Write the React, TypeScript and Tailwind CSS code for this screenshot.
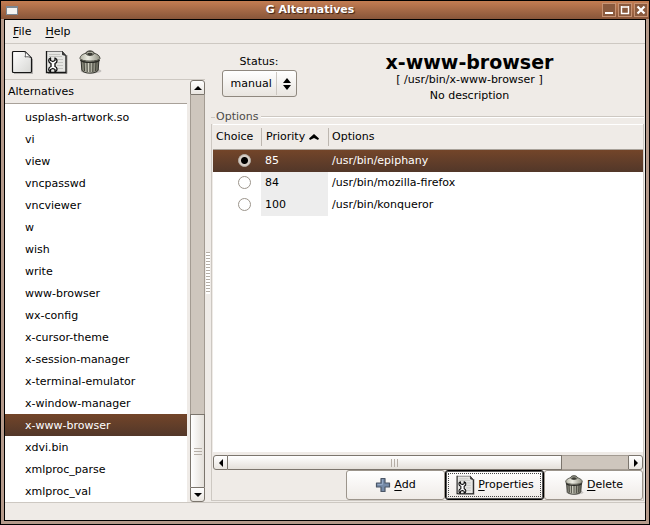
import React, { useState } from 'react';

const ALTERNATIVES = [
  'usplash-artwork.so',
  'vi',
  'view',
  'vncpasswd',
  'vncviewer',
  'w',
  'wish',
  'write',
  'www-browser',
  'wx-config',
  'x-cursor-theme',
  'x-session-manager',
  'x-terminal-emulator',
  'x-window-manager',
  'x-www-browser',
  'xdvi.bin',
  'xmlproc_parse',
  'xmlproc_val',
];

const OPTIONS = [
  { priority: 85, path: '/usr/bin/epiphany' },
  { priority: 84, path: '/usr/bin/mozilla-firefox' },
  { priority: 100, path: '/usr/bin/konqueror' },
];

interface IconProps {
  className: string;
}

function PageIcon({ className }: IconProps) {
  return (
    <svg viewBox="0 0 24 24" className={className}>
      <defs>
        <linearGradient id="page" x1="0" y1="0" x2="1" y2="1">
          <stop offset="0" stopColor="#fff" />
          <stop offset="1" stopColor="#d6d6d3" />
        </linearGradient>
      </defs>
      <path d="M4 23.5h18.500V9" fill="none" stroke="#000" strokeOpacity=".25" />
      <path
        d="M3.500 1.500h11.500l6.500 6.500v13.500a1 1 0 0 1-1 1h-17a1 1 0 0 1-1-1v-19a1 1 0 0 1 1-1z"
        fill="url(#page)"
        stroke="#161616"
        strokeWidth="1.200"
      />
      <path d="M15 1.500c.8 2 .6 4 0 5.500 2-.5 4.500-.3 6.500 1z" fill="#fff" stroke="#3a3a3a" strokeWidth=".8" />
    </svg>
  );
}

function PropertiesIcon({ className }: IconProps) {
  return (
    <svg viewBox="0 0 24 24" className={className}>
      <path d="M4 23.500h19V5" fill="none" stroke="#000" strokeOpacity=".3" />
      <path d="M2.500 1.500h16l3.500 4v17H2.500z" fill="#e6e6e3" />
      <path d="M5 4.500h11M5 6.500h13M13 9.500h6M13 12.500h6M13 15.500h6M13 18.500h6" stroke="#c4c4c0" />
      <path d="M2.500 1.500h16.500" stroke="#777" />
      <path d="M2.500 1v21.500H22V5.500" fill="none" stroke="#161616" strokeWidth="1.300" />
      <path d="M18.500 1.500l3.500 4-3.500-.8z" fill="#444" stroke="#222" strokeWidth=".8" />
      <path
        d="M6.500 8C4 9 4 12.500 7 13.500v3C4 17.500 4 21 6.500 22v-2.500l2.300-1 2.200 1V22c2.700-1 2.700-4.500 0-5.500v-3c2.700-1 2.700-4.500 0-5.500v2.500l-2.200 1-2.300-1z"
        fill="#fff"
        stroke="#0c0c0c"
        strokeWidth="1.300"
        strokeLinejoin="round"
      />
    </svg>
  );
}

function TrashIcon({ className }: IconProps) {
  return (
    <svg viewBox="0 0 24 24" className={className}>
      <defs>
        <linearGradient id="can">
          <stop offset="0" stopColor="#6a6a5e" />
          <stop offset=".4" stopColor="#d4d4c6" />
          <stop offset="1" stopColor="#5c5c50" />
        </linearGradient>
        <linearGradient id="lid">
          <stop offset="0" stopColor="#b5b5a6" />
          <stop offset=".4" stopColor="#ecece2" />
          <stop offset="1" stopColor="#8f8f80" />
        </linearGradient>
      </defs>
      <ellipse cx="13" cy="21" rx="10.500" ry="2.500" fill="#000" fillOpacity=".18" />
      <path d="M3 9l.8 11c1.200 4.200 15.200 4.200 16.400 0L21 9z" fill="url(#can)" stroke="#33332d" />
      <path
        d="M6 12l.5 9M9 12.500l.2 9.500M12 12.500v9.500M15 12.500l-.2 9.500M18 12l-.5 9"
        stroke="#45453c"
        strokeWidth="1.100"
      />
      <path d="M2.500 10c2.500 3.200 16.500 3.200 19 0" fill="none" stroke="#2b2b26" strokeWidth="1.400" />
      <path
        d="M2 8.500C2 5.500 5 4 8 3.200c0-3 8-3 8 0 3 .8 6 2.300 6 5.300-1 3.500-19 3.500-20 0z"
        fill="url(#lid)"
        stroke="#4a4a42"
      />
      <path d="M8 3.500c0-3 8-3 8 0-.5 2.500-7.500 2.500-8 0z" fill="#bdbdaf" stroke="#3c3c35" />
      <ellipse cx="12" cy="4" rx="2.800" ry="1.200" fill="#3c3c35" />
    </svg>
  );
}

function AddIcon({ className }: IconProps) {
  return (
    <svg viewBox="0 0 16 16" className={className}>
      <path
        d="M6 1.500h4V6h4.500v4H10v4.500H6V10H1.500V6H6z"
        fill="#768ba8"
        stroke="#4b5666"
        strokeWidth="1.200"
        strokeLinejoin="round"
      />
      <path d="M7.500 2.500v5h-5" fill="none" stroke="#94a8c4" />
    </svg>
  );
}

interface ScrollArrowProps {
  label: string;
  className: string;
  points: string;
}

function ScrollArrow({ label, className, points }: ScrollArrowProps) {
  return (
    <button
      aria-label={label}
      className={`flex size-[15px] shrink-0 items-center justify-center border border-[#7b756d] bg-gradient-to-b from-white to-[#e9e5e0] ${className}`}
    >
      <svg viewBox="0 0 8 8" className="size-2">
        <polygon points={points} fill="#000" />
      </svg>
    </button>
  );
}

interface ActionButtonProps {
  label: string;
  icon: React.ReactNode;
  focused?: boolean;
}

function ActionButton({ label, icon, focused }: ActionButtonProps) {
  return (
    <button
      className={`h-[30px] w-[99px] rounded-[3px] bg-gradient-to-b from-white to-[#efebe7] ${
        focused ? 'border border-black p-0.5 ring-1 ring-[#555] ring-inset' : 'border border-[#9c958c] p-0.5'
      }`}
    >
      <span
        className={`flex h-full items-center justify-center gap-[3px] ${
          focused ? 'border border-dotted border-[#444]' : ''
        }`}
      >
        {icon}
        <span>
          <span className="underline underline-offset-2">{label[0]}</span>
          {label.slice(1)}
        </span>
      </span>
    </button>
  );
}

const WINDOW_BUTTON =
  'flex size-[14px] items-center justify-center border border-[#c79272] bg-[#8a5a3e]';

export default function App() {
  const [selected, setSelected] = useState('x-www-browser');
  const [choice, setChoice] = useState(0);
  const [status, setStatus] = useState('manual');

  return (
    <div className="flex h-screen flex-col border border-black bg-[#b59a8b] font-['DejaVu_Sans',sans-serif] text-[11px] leading-[14px] text-black">
      {/* title bar */}
      <header className="flex h-[18px] shrink-0 items-center bg-gradient-to-b from-[#c47d52] to-[#88563a] pr-px pl-[5px]">
        <span className="h-[9px] w-3 border border-t-2 border-[#7d8791] bg-[#f4f4f2]"></span>
        <h1 className="flex-1 text-center font-bold text-white [text-shadow:1px_1px_1px_#3a2012]">G Alternatives</h1>
        <div className="flex gap-0.5">
          <button aria-label="Minimize" className={WINDOW_BUTTON}>
            <svg viewBox="0 0 10 10" className="size-[10px]">
              <path d="M1 8h8" stroke="#fff" strokeWidth="2" />
            </svg>
          </button>
          <button aria-label="Maximize" className={WINDOW_BUTTON}>
            <svg viewBox="0 0 10 10" className="size-[10px]">
              <path d="M1.500 1v7.500h7V1M1 2h8" fill="none" stroke="#fff" strokeWidth="1.400" />
            </svg>
          </button>
          <button aria-label="Close" className={WINDOW_BUTTON}>
            <svg viewBox="0 0 10 10" className="size-[10px]">
              <path d="M1.500 1.500l7 7M8.500 1.500l-7 7" stroke="#fff" strokeWidth="2.200" />
            </svg>
          </button>
        </div>
      </header>

      <div className="mx-[3px] mb-[3px] flex min-h-0 flex-1 flex-col border border-black bg-[#efebe7]">
        {/* menu bar */}
        <nav className="flex h-6 shrink-0 items-center gap-[14px] border-b border-[#cdc8c2] px-2 pt-px">
          <button>
            <span className="underline underline-offset-2">F</span>ile
          </button>
          <button>
            <span className="underline underline-offset-2">H</span>elp
          </button>
        </nav>

        <main className="flex min-h-0 flex-1">
          <section className="flex w-[200px] shrink-0 flex-col">
            <div className="flex h-9 shrink-0 items-center gap-[10px] border-b border-[#cdc8c2] pl-[5px]">
              <button aria-label="New">
                <PageIcon className="size-6" />
              </button>
              <button aria-label="Properties">
                <PropertiesIcon className="size-6" />
              </button>
              <button aria-label="Delete">
                <TrashIcon className="size-6" />
              </button>
            </div>

            <div className="flex min-h-0 flex-1 gap-[3px]">
              <div className="flex min-w-0 flex-1 flex-col bg-white">
                <h2 className="flex h-6 shrink-0 items-center border-b border-[#a8a199] bg-[#efebe7] pt-px pl-[3px]">
                  Alternatives
                </h2>
                <ul className="min-h-0 flex-1 overflow-hidden pt-0.5">
                  {ALTERNATIVES.map(name => (
                    <li key={name}>
                      <button
                        onClick={() => setSelected(name)}
                        className={`block h-[22px] w-full pt-0.5 pl-5 text-left ${
                          selected === name ? 'bg-gradient-to-b from-[#734529] to-[#523729] text-white' : ''
                        }`}
                      >
                        {name}
                      </button>
                    </li>
                  ))}
                </ul>
              </div>

              {/* vertical scrollbar */}
              <div className="flex w-[15px] flex-col">
                <ScrollArrow label="Scroll up" className="rounded-t-[3px]" points="4,2 8,6 0,6" />
                <div className="flex-1 border-x border-[#a39b92] bg-[#cec6bd]"></div>
                <div className="flex h-[73px] flex-col items-center justify-center gap-0.5 border border-b-0 border-[#7b756d] bg-gradient-to-r from-white to-[#e4e0da]">
                  <span className="h-px w-2 bg-[#b5aea6]"></span>
                  <span className="h-px w-2 bg-[#b5aea6]"></span>
                  <span className="h-px w-2 bg-[#b5aea6]"></span>
                </div>
                <ScrollArrow label="Scroll down" className="rounded-b-[3px]" points="0,2 8,2 4,6" />
              </div>
            </div>
          </section>

          {/* pane handle */}
          <div className="flex w-[6px] shrink-0 items-center justify-center">
            <div className="h-[42px] w-1 bg-[repeating-linear-gradient(to_bottom,#b5aea6_0_1px,#fff_1px_3px)]"></div>
          </div>

          <section className="flex min-w-0 flex-1 flex-col pr-px pb-px">
            <div className="flex h-[66px] shrink-0 gap-[10px] pl-[10px]">
              <div className="flex w-[76px] flex-col items-center pt-[11px]">
                <label htmlFor="status">Status:</label>
                <div className="relative mt-px">
                  <select
                    id="status"
                    value={status}
                    onChange={e => setStatus(e.target.value)}
                    className="h-[27px] w-[75px] appearance-none rounded-[3px] border border-[#8f887f] bg-gradient-to-b from-white to-[#e9e5e0] pl-2"
                  >
                    <option>manual</option>
                    <option>auto</option>
                  </select>
                  <div className="pointer-events-none absolute inset-y-0.5 right-[6px] flex items-center border-l border-[#cdc8c2] pl-[6px]">
                    <svg viewBox="0 0 8 12" className="h-3 w-2">
                      <path d="M4 0l4 5H0zM4 12l4-5H0z" />
                    </svg>
                  </div>
                </div>
              </div>
              <div className="flex flex-1 flex-col items-center pt-[7px] pr-3">
                <h2 className="text-[19px] leading-[22px] font-bold">x-www-browser</h2>
                <p>[ /usr/bin/x-www-browser ]</p>
                <p className="mt-0.5">No description</p>
              </div>
            </div>

            <fieldset className="flex min-h-0 min-w-0 flex-1 flex-col">
              <legend className="flex w-full items-center leading-[14px] text-[#4c4a47]">
                <span className="mt-px h-px w-1 bg-[#cdc8c2]"></span>
                <span className="px-px">Options</span>
                <span className="ml-0.5 h-0.5 flex-1 border-b border-white bg-[#cdc8c2]"></span>
              </legend>
              <div className="flex min-h-0 flex-1 flex-col border border-t-0 border-[#cdc8c2] pl-px">
                <div className="min-h-0 flex-1 bg-white">
                  <table className="w-full table-fixed border-collapse">
                    <thead>
                      <tr className="h-[25px] border-t border-b border-t-white border-b-[#a8a199] bg-[#efebe7] text-left">
                        <th className="w-12 pl-[3px] font-normal">Choice</th>
                        <th className="w-[67px] font-normal">
                          <button className="flex h-[18px] w-full items-center gap-1 border-l border-[#bdb7b0] pl-1">
                            Priority
                            <svg viewBox="0 0 10 6" className="h-[6px] w-[10px]">
                              <path d="M5 0l5 4.500-1 1.500-4-2-4 2-1-1.500z" />
                            </svg>
                          </button>
                        </th>
                        <th className="font-normal">
                          <span className="flex h-[18px] items-center border-l border-[#bdb7b0] pl-[3px]">Options</span>
                        </th>
                      </tr>
                    </thead>
                    <tbody>
                      {OPTIONS.map((option, i) => (
                        <tr
                          key={option.path}
                          className={`h-[22px] ${
                            choice === i ? 'bg-gradient-to-b from-[#734529] to-[#523729] text-white' : ''
                          }`}
                        >
                          <td className="pl-[25px]">
                            <input
                              type="radio"
                              name="choice"
                              aria-label={option.path}
                              checked={choice === i}
                              onChange={() => setChoice(i)}
                              className={`block size-[13px] appearance-none rounded-full border ${
                                choice === i
                                  ? 'border-[#b5aea6] bg-[radial-gradient(circle,#000_0_3px,#d6cec6_4px)]'
                                  : 'border-[#9c958c] bg-white'
                              }`}
                            />
                          </td>
                          <td className={`pl-1 ${choice === i ? '' : 'bg-[#ededed]'}`}>{option.priority}</td>
                          <td className="pl-1">{option.path}</td>
                        </tr>
                      ))}
                    </tbody>
                  </table>
                </div>

                {/* horizontal scrollbar */}
                <div className="flex pt-[3px]">
                  <ScrollArrow label="Scroll left" className="rounded-l-[3px]" points="2,4 6,0 6,8" />
                  <div className="flex h-[15px] flex-5 items-center justify-center gap-0.5 border border-l-0 border-[#7b756d] bg-gradient-to-b from-white to-[#e4e0da]">
                    <span className="h-2 w-px bg-[#b5aea6]"></span>
                    <span className="h-2 w-px bg-[#b5aea6]"></span>
                    <span className="h-2 w-px bg-[#b5aea6]"></span>
                  </div>
                  <div className="flex-1 border-y border-[#a39b92] bg-[#cec6bd]"></div>
                  <ScrollArrow label="Scroll right" className="rounded-r-[3px]" points="2,0 6,4 2,8" />
                </div>

                <div className="flex justify-end">
                  <ActionButton label="Add" icon={<AddIcon className="size-4" />} />
                  <ActionButton label="Properties" icon={<PropertiesIcon className="size-5" />} focused />
                  <ActionButton label="Delete" icon={<TrashIcon className="size-5" />} />
                </div>
              </div>
            </fieldset>
          </section>
        </main>

        {/* status bar */}
        <footer className="h-[18px] shrink-0 border-t border-[#cdc8c2]"></footer>
      </div>
    </div>
  );
}
